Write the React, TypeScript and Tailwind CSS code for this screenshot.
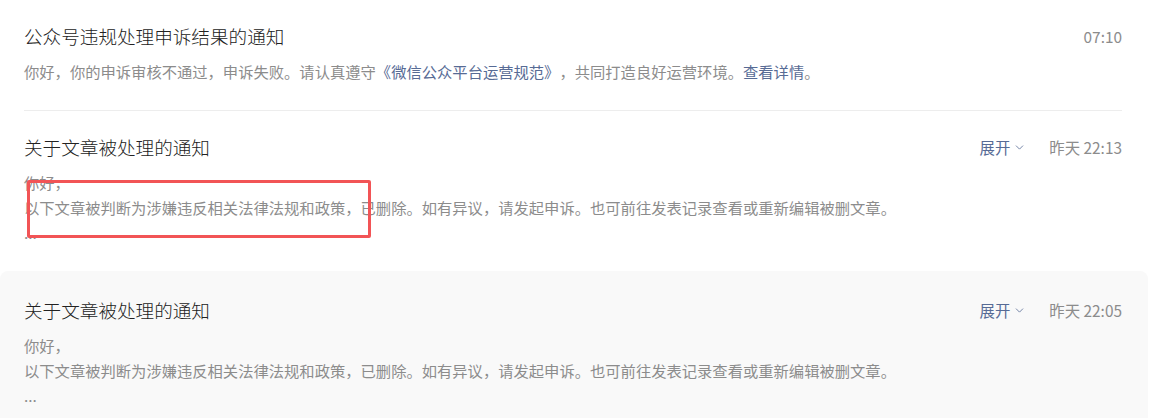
import { ChevronDown } from "lucide-react";

type Notice = {
  id: string;
  title: string;
  time: string;
  expandable: boolean;
  hovered?: boolean;
  body: React.ReactNode;
};

const Link = ({ children }: { children: React.ReactNode }) => (
  <span className="text-[#576b95]">{children}</span>
);

const deletedBody = (
  <>
    <p>你好，</p>
    <p>
      以下文章被判断为涉嫌违反相关法律法规和政策，已删除。如有异议，请发起申诉。也可前往发表记录查看或重新编辑被删文章。
    </p>
    <p>...</p>
  </>
);

const notices: Notice[] = [
  {
    id: "1",
    title: "公众号违规处理申诉结果的通知",
    time: "07:10",
    expandable: false,
    body: (
      <p>
        你好，你的申诉审核不通过，申诉失败。请认真遵守<Link>《微信公众平台运营规范》</Link>
        ，共同打造良好运营环境。<Link>查看详情</Link>。
      </p>
    ),
  },
  {
    id: "2",
    title: "关于文章被处理的通知",
    time: "昨天 22:13",
    expandable: true,
    body: deletedBody,
  },
  {
    id: "3",
    title: "关于文章被处理的通知",
    time: "昨天 22:05",
    expandable: true,
    hovered: true,
    body: deletedBody,
  },
];

export default function App() {
  return (
    <div
      className="relative w-[1148px] bg-white [text-spacing-trim:space-all]"
      style={{ fontFamily: '"Noto Sans CJK SC", "Noto Sans", sans-serif' }}
    >
      {notices.map((n, i) => (
        <div
          key={n.id}
          className={`pl-6 pr-[26px] ${n.hovered ? "bg-[#f9f9f9] rounded-lg pt-[25px]" : "pt-[22px]"}`}
        >
          <div
            className={`pb-[26px] ${
              i === 0 ? "border-b border-[#ededed]" : ""
            }`}
          >
            {/* 标题行 */}
            <div className="flex items-center justify-between">
              <h3 className="text-[18.6px] leading-[28px] font-light text-[#222]">
                {n.title}
              </h3>
              <div className="flex items-center gap-[23px] text-[15.4px] leading-[28px]">
                {n.expandable && (
                  <button className="flex items-center gap-[3px] text-[#576b95]">
                    展开
                    <ChevronDown size={13} strokeWidth={1.5} />
                  </button>
                )}
                <span className="text-[#8c8c8c]">{n.time}</span>
              </div>
            </div>
            {/* 内容 */}
            <div className="mt-[9px] text-[15.3px] leading-[25px] text-[#8c8c8c]">
              {n.body}
            </div>
          </div>
        </div>
      ))}

      {/* 红框标注 */}
      <div className="absolute left-[27px] top-[180px] w-[344px] h-[58px] border-[3px] border-[#f25456] rounded-[2px] pointer-events-none" />
    </div>
  );
}
